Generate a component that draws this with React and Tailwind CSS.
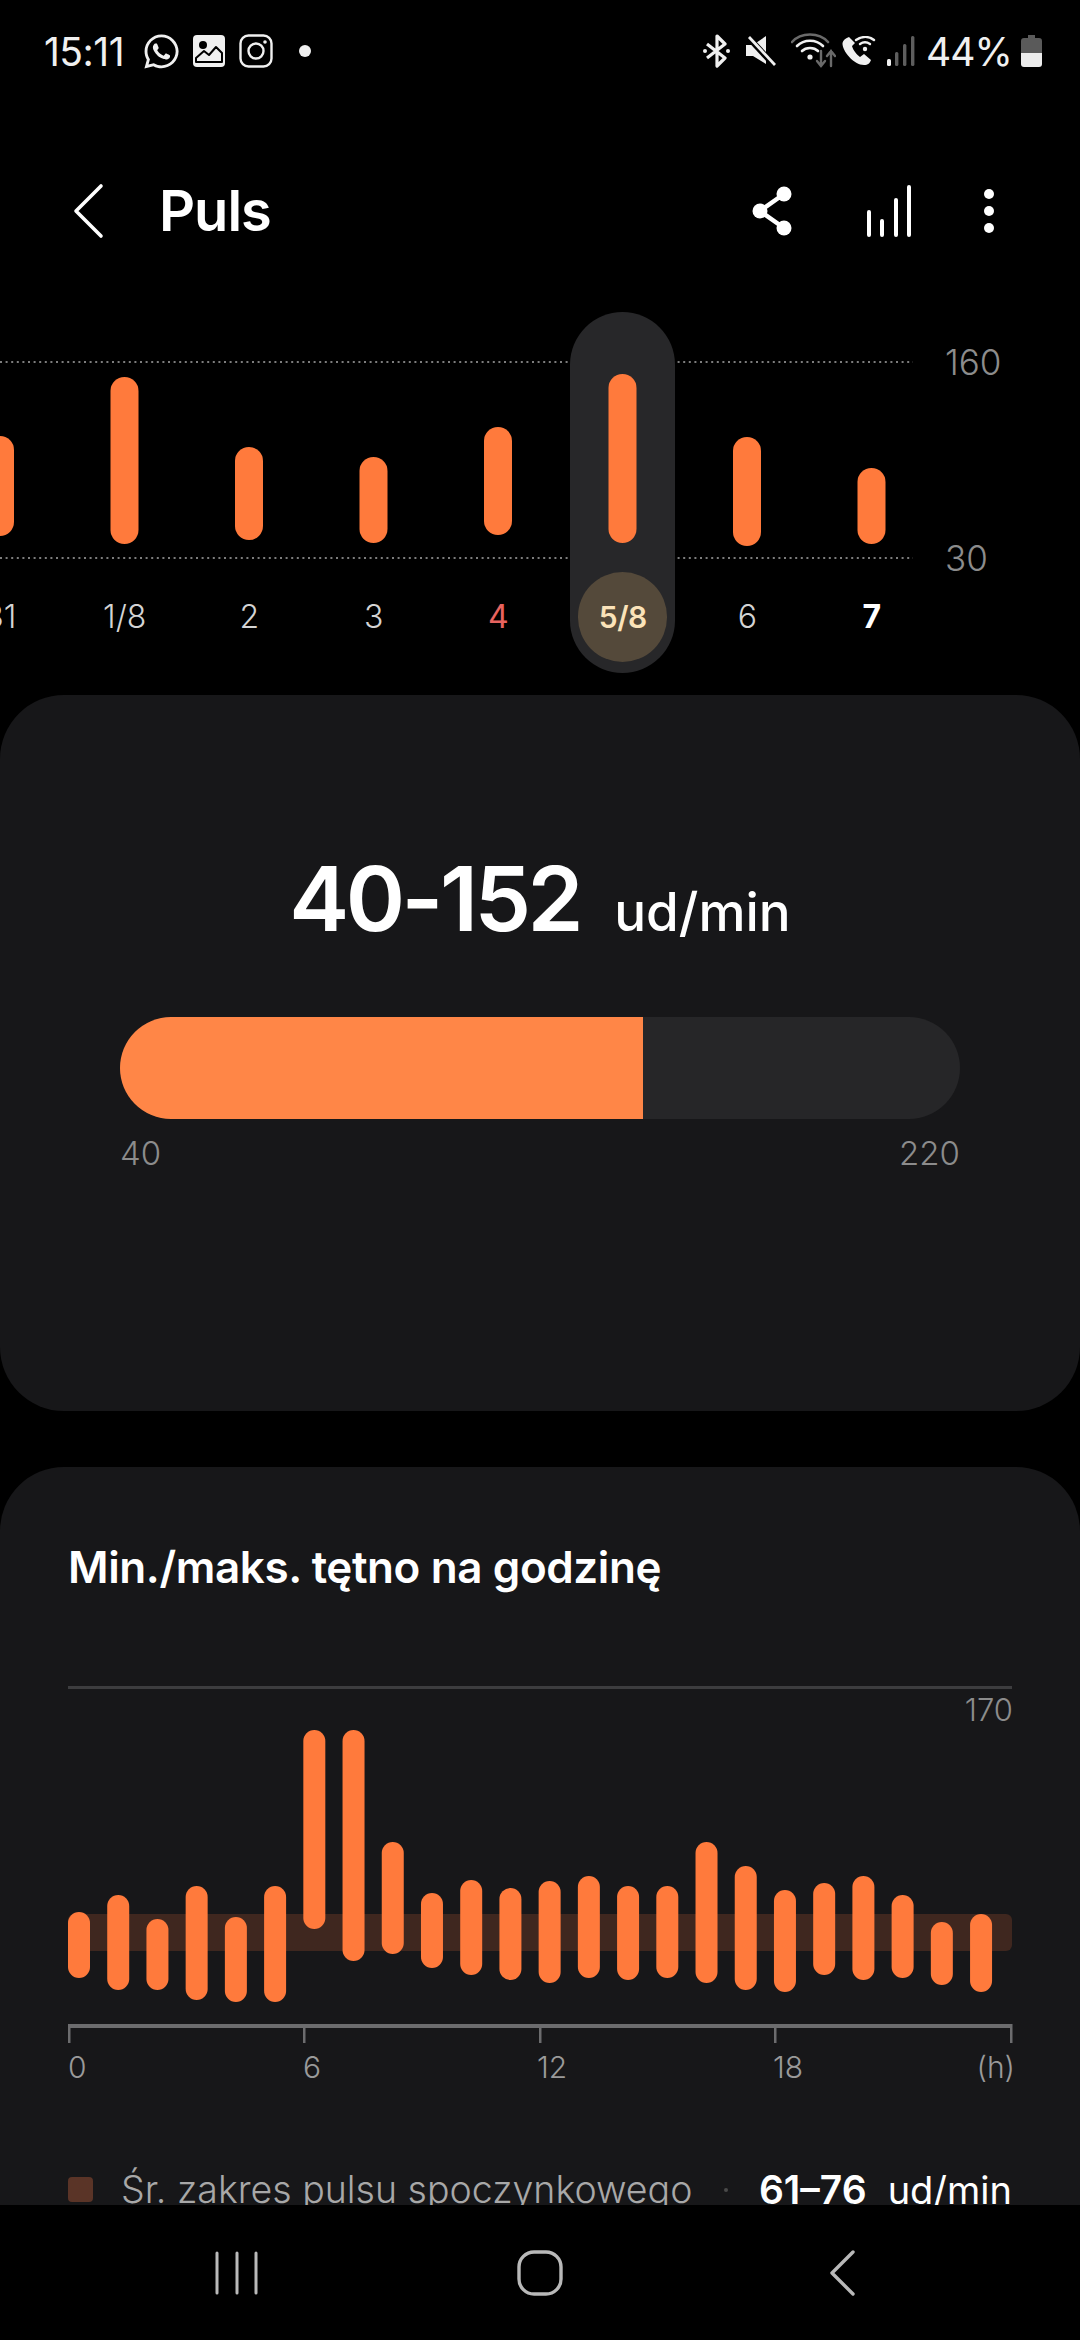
import React from 'react';
import { FaWhatsapp } from 'react-icons/fa';

const dayBars = [
  { x: 0, top: 436, bottom: 536 },
  { x: 124.5, top: 377, bottom: 544 },
  { x: 249, top: 447, bottom: 540 },
  { x: 373.5, top: 457, bottom: 543 },
  { x: 498, top: 427, bottom: 535 },
  { x: 622.5, top: 374, bottom: 543 },
  { x: 747, top: 437, bottom: 546 },
  { x: 871.5, top: 468, bottom: 544 },
];

const hourBars = [
  [1912, 1978], [1895, 1990], [1919, 1990], [1886, 2000], [1917, 2002], [1886, 2002],
  [1730, 1929], [1730, 1961], [1842, 1954], [1893, 1968], [1880, 1975], [1888, 1980],
  [1881, 1983], [1876, 1978], [1886, 1980], [1886, 1978], [1842, 1983], [1866, 1990],
  [1890, 1992], [1883, 1975], [1876, 1980], [1895, 1978], [1922, 1985], [1914, 1992],
];

const dayLabels = ['31', '1/8', '2', '3', '4', '5/8', '6', '7'];
const hourTicks = [69, 304, 540, 775, 1011];

const StatusBar = () => (
  <div className="flex h-[102px] items-center text-[#f0f0f0]">
    <span className="ml-[44px] w-[84px] text-[39px] font-normal leading-none tracking-[-0.5px]">15:11</span>
    <FaWhatsapp className="ml-[14px] mt-[1px] h-[39px] w-[39px]" />
    <svg className="ml-[12px] h-[32px] w-[32px]" viewBox="0 0 32 32">
      <rect width="32" height="32" rx="4" fill="#f0f0f0" />
      <circle cx="10" cy="10" r="4" fill="#000" />
      <path d="M3 27 L3 23 L11 16 L16 20 L23 12 L29 18 L29 27 Z" fill="#f0f0f0" stroke="#000" strokeWidth="2" strokeLinejoin="round" />
    </svg>
    <svg className="ml-[14px] h-[34px] w-[34px]" viewBox="0 0 34 34" fill="none" stroke="#f0f0f0" strokeWidth="2.4">
      <rect x="1.5" y="1.5" width="31" height="31" rx="8" />
      <circle cx="17" cy="17" r="7.5" />
      <circle cx="26" cy="8" r="1.8" fill="#f0f0f0" stroke="none" />
    </svg>
    <span className="ml-[26px] h-[12px] w-[12px] rounded-full bg-[#f0f0f0]" />

    <svg className="ml-[392px] h-[34px] w-[27px]" viewBox="0 0 27 34" fill="none" stroke="#f0f0f0" strokeWidth="3.2" strokeLinejoin="round">
      <path d="M4 10 L22 24 L14 32 L14 2 L22 10 L4 24" />
      <circle cx="2" cy="17" r="2" fill="#f0f0f0" stroke="none" />
      <circle cx="25" cy="17" r="2" fill="#f0f0f0" stroke="none" />
    </svg>
    <svg className="ml-[16px] h-[30px] w-[30px]" viewBox="0 0 30 30">
      <path d="M0 9 H7 L20 0 V28 L7 20 H0 Z" fill="#f0f0f0" />
      <path d="M2 1 L28 29" stroke="#000" strokeWidth="6" />
      <path d="M3 1 L29 29" stroke="#f0f0f0" strokeWidth="2.8" />
    </svg>
    <svg className="ml-[15px] h-[36px] w-[45px]" viewBox="0 0 45 36" fill="none" strokeLinecap="round">
      <path d="M1 9 C10 -1 28 -1 37 9" stroke="#6a6a6a" strokeWidth="2.6" />
      <path d="M6 13 C13 6 25 6 32 13" stroke="#f0f0f0" strokeWidth="2.6" />
      <path d="M11 18 C15 14 23 14 27 18" stroke="#f0f0f0" strokeWidth="2.6" />
      <circle cx="19" cy="24" r="2.6" fill="#f0f0f0" />
      <path d="M30 18 V33 M26 28 L30 33 L34 28" stroke="#6a6a6a" strokeWidth="2.4" />
      <path d="M40 33 V18 M36 23 L40 18 L44 23" stroke="#6a6a6a" strokeWidth="2.4" />
    </svg>
    <svg className="ml-[6px] h-[30px] w-[34px]" viewBox="0 0 34 30">
      <path d="M7 1 C4 2 1 4 0.5 7 C0 15 12 29 22 29 C26 29 28 27 29 24 L22 18 L18 21 C15 19 11 14 10 10 L13 7 Z" fill="#f0f0f0" />
      <g fill="none" stroke="#f0f0f0" strokeWidth="2.4" strokeLinecap="round">
        <path d="M14 4 C20 0 27 0 32 4" />
        <path d="M18 8 C21 6 25 6 28 8" />
      </g>
      <circle cx="23" cy="13" r="2.2" fill="#f0f0f0" />
    </svg>
    <svg className="ml-[11px] h-[30px] w-[28px]" viewBox="0 0 28 30">
      <rect x="0" y="23" width="4" height="7" rx="1.5" fill="#f0f0f0" />
      <rect x="8" y="16" width="3.4" height="14" rx="1.5" fill="#5e5e5e" />
      <rect x="16" y="8" width="3.4" height="22" rx="1.5" fill="#5e5e5e" />
      <rect x="24" y="0" width="3.4" height="30" rx="1.5" fill="#5e5e5e" />
    </svg>
    <span className="ml-[11px] w-[87px] text-[39px] font-normal leading-none tracking-[-1px]">44%</span>
    <svg className="ml-[8px] h-[32px] w-[21px]" viewBox="0 0 21 32">
      <path d="M7 0 H14 V3 H18 A3 3 0 0 1 21 6 V18 H0 V6 A3 3 0 0 1 3 3 H7 Z" fill="#5a5a5a" />
      <path d="M0 18 H21 V29 A3 3 0 0 1 18 32 H3 A3 3 0 0 1 0 29 Z" fill="#ececec" />
    </svg>
  </div>
);

const Header = () => (
  <div className="mt-[50px] flex h-[118px] items-center text-white">
    <svg className="ml-[72px] h-[56px] w-[32px]" viewBox="0 0 32 56" fill="none" stroke="#fff" strokeWidth="3.6" strokeLinecap="round" strokeLinejoin="round">
      <path d="M29 3 L4 28 L29 53" />
    </svg>
    <h1 className="ml-[55px] text-[56px] font-semibold leading-none tracking-[-1px]">Puls</h1>
    <svg className="ml-auto h-[50px] w-[44px]" viewBox="0 0 44 50" fill="#fff" stroke="#fff" strokeWidth="4.5">
      <path d="M10 25 L34 8 M10 25 L34 42" fill="none" />
      <circle cx="10" cy="25" r="7.5" stroke="none" fill="#fff" />
      <circle cx="34" cy="8" r="7.5" stroke="none" />
      <circle cx="34" cy="42" r="7.5" stroke="none" />
    </svg>
    <svg className="ml-[72px] h-[52px] w-[46px]" viewBox="0 0 46 52" fill="none" stroke="#fff" strokeWidth="4" strokeLinecap="round">
      <path d="M3 27 V50 M16 36 V50 M30 15 V50 M43 2 V50" />
    </svg>
    <svg className="ml-[71px] mr-[85px] h-[46px] w-[12px]" viewBox="0 0 12 46" fill="#fff">
      <circle cx="6" cy="6" r="5" />
      <circle cx="6" cy="23" r="5" />
      <circle cx="6" cy="40" r="5" />
    </svg>
  </div>
);

const WeekChart = () => (
  <div className="relative mt-[42px] h-[361px]">
    <svg className="absolute inset-0 h-full w-full" viewBox="0 312 1080 361">
      <path d="M0 362 H913 M0 558 H913" stroke="#7d7d7d" strokeWidth="2" strokeDasharray="2 3.6" />
      <rect x="570" y="312" width="105" height="361" rx="52.5" fill="#272729" />
      {dayBars.map((b) => (
        <rect key={b.x} x={b.x - 14} y={b.top} width="28" height={b.bottom - b.top} rx="14" fill="#ff7a3c" />
      ))}
    </svg>
    <span className="absolute left-[945px] top-[33px] text-[35px] font-light leading-none text-[#8c8c8c]">160</span>
    <span className="absolute left-[945px] top-[229px] text-[35px] font-light leading-none text-[#8c8c8c]">30</span>
    <div className="relative flex pt-[260px] -ml-[62px] w-[1120px]">
      {dayLabels.map((label) => (
        <div key={label} className="flex h-[90px] w-[124.5px] items-center justify-center text-[32px] font-light leading-none text-[#d4d4d4]">
          {label === '5/8' ? (
            <span className="flex h-[90px] w-[89px] items-center justify-center rounded-full bg-[#54493a] text-[30px] font-semibold tracking-[-0.5px] text-[#fbe3b9]">{label}</span>
          ) : label === '4' ? (
            <span className="font-normal text-[#e8635f]">{label}</span>
          ) : label === '7' ? (
            <span className="font-bold text-white">{label}</span>
          ) : (
            label
          )}
        </div>
      ))}
    </div>
  </div>
);

const RangeCard = () => (
  <div className="mt-[22px] h-[716px] rounded-[64px] bg-[#171719] px-[120px] pt-[159px]">
    <div className="flex items-baseline justify-center text-white">
      <span className="text-[90px] font-semibold leading-none tracking-[-3.5px]">40-152</span>
      <span className="ml-[34px] text-[53px] font-medium leading-none">ud/min</span>
    </div>
    <div className="mt-[73px] flex h-[102px] overflow-hidden rounded-full bg-[#262628]">
      <div className="h-full w-[523px] bg-[#ff8647]" />
    </div>
    <div className="mt-[18px] flex justify-between text-[33px] font-light leading-none text-[#8c8c8c]">
      <span>40</span>
      <span>220</span>
    </div>
  </div>
);

const HourlyCard = () => (
  <div className="mt-[56px] h-[738px] overflow-hidden rounded-t-[64px] bg-[#171719]">
    <h2 className="pl-[68px] pt-[78px] text-[44px] font-semibold leading-none tracking-[-0.4px] text-white">Min./maks. tętno na godzinę</h2>
    <div className="mx-[68px] mt-[97px] h-[3px] bg-[#3d3d3f]" />
    <div className="mr-[67px] mt-[5px] text-right text-[31px] font-light leading-none text-[#8c8c8c]">170</div>
    <svg className="block h-[320px] w-full" viewBox="0 1725 1080 320">
      <rect x="68" y="1914" width="944" height="37" rx="6" fill="#3f271f" />
      {hourBars.map(([top, bottom], i) => (
        <rect key={i} x={79 + i * 39.22 - 11} y={top} width="22" height={bottom - top} rx="11" fill="#ff7a3c" />
      ))}
      <rect x="68" y="2024" width="944" height="4" fill="#6c6c6e" />
      {hourTicks.map((x) => (
        <rect key={x} x={x - 1} y="2024" width="2.5" height="19" fill="#6c6c6e" />
      ))}
    </svg>
    <div className="relative mt-[7px] flex h-[30px] pl-[68px] pr-[65px] text-[30px] font-light leading-none text-[#9a9a9a]">
      <span className="w-[235px]">0</span>
      <span className="w-[234px]">6</span>
      <span className="w-[236px]">12</span>
      <span>18</span>
      <span className="ml-auto">(h)</span>
    </div>
    <div className="mt-[88px] flex items-center pl-[68px] pr-[68px]">
      <span className="h-[25px] w-[25px] rounded-[4px] bg-[#5a3427]" />
      <span className="ml-[28px] text-[37.5px] font-light leading-none text-[#a8a8a8]">Śr. zakres pulsu spoczynkowego</span>
      <span className="ml-[32px] h-[4px] w-[4px] rounded-full bg-[#4a4a4a]" />
      <span className="ml-auto flex items-baseline text-white">
        <span className="text-[39px] font-semibold leading-none">61–76</span>
        <span className="ml-[21px] text-[38px] font-normal leading-none">ud/min</span>
      </span>
    </div>
  </div>
);

const NavBar = () => (
  <div className="relative flex h-[135px] items-center bg-black">
    <svg className="ml-[215px] h-[44px] w-[44px]" viewBox="0 0 44 44" stroke="#b9b9b9" strokeWidth="3" strokeLinecap="round">
      <path d="M2 2 V42 M22 2 V42 M41 2 V42" />
    </svg>
    <svg className="ml-[258px] h-[46px] w-[46px]" viewBox="0 0 46 46" fill="none" stroke="#b9b9b9" strokeWidth="3.4">
      <rect x="2" y="2" width="42" height="42" rx="15" />
    </svg>
    <svg className="ml-[266px] h-[46px] w-[26px]" viewBox="0 0 26 46" fill="none" stroke="#b9b9b9" strokeWidth="3.4" strokeLinecap="round" strokeLinejoin="round">
      <path d="M24 2 L3 23 L24 44" />
    </svg>
  </div>
);

export default function App() {
  return (
    <div className="h-[2340px] w-[1080px] overflow-hidden bg-black font-['Inter',sans-serif]">
      <StatusBar />
      <Header />
      <WeekChart />
      <RangeCard />
      <HourlyCard />
      <NavBar />
    </div>
  );
}
